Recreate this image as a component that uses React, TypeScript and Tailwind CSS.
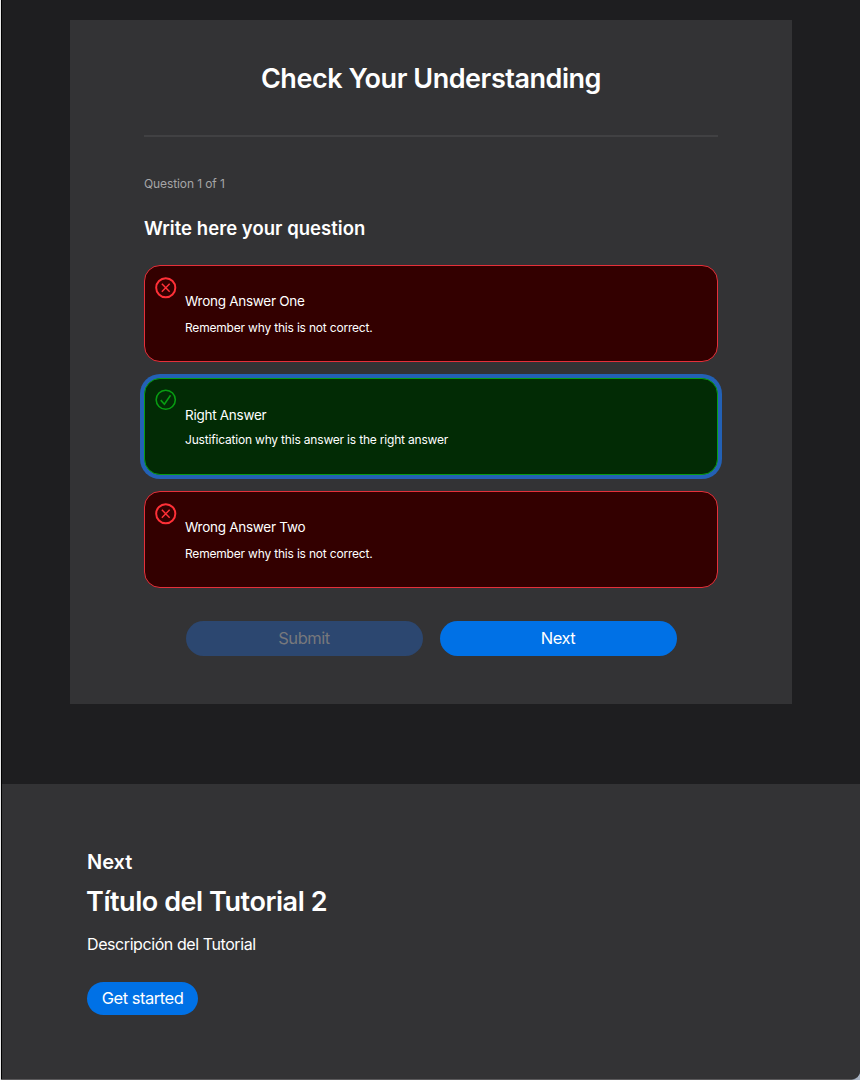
type AnswerProps = { title: string; note: string; correct?: boolean };

function StatusIcon({ correct }: { correct?: boolean }) {
  return (
    <svg
      viewBox="0 0 22 22"
      className={`h-[21.5px] w-[21.5px] shrink-0 ${correct ? "text-[#089c12]" : "text-[#ff3037]"}`}
      fill="none"
      stroke="currentColor"
    >
      <circle cx="11" cy="11" r="9.8" strokeWidth={correct ? 1.6 : 2} />
      {correct ? (
        <path d="M5.9 11.4 9.6 15.6 15.9 6.4" strokeWidth="1.6" />
      ) : (
        <path d="M7 7 15 15M15 7 7 15" strokeWidth="1.5" />
      )}
    </svg>
  );
}

function Answer({ title, note, correct }: AnswerProps) {
  return (
    <div
      className={`flex h-[97px] rounded-[16px] border pl-[10px] ${
        correct
          ? "border-[#089c12] bg-[#022b05] pt-[10px] shadow-[0_0_0_4px_#2361b5]"
          : "border-[#e5303a] bg-[#330000] pt-[11px]"
      }`}
    >
      <StatusIcon correct={correct} />
      <div className={`ml-[8.5px] ${correct ? "pt-4" : "pt-[14px]"}`}>
        <p className="text-[13.5px] leading-5 tracking-[-0.27px]">{title}</p>
        <p className={`text-[12px] leading-[18px] tracking-[-0.19px] ${correct ? "mt-1.5" : "mt-2"}`}>{note}</p>
      </div>
    </div>
  );
}

export default function App() {
  return (
    <div className="h-[1080px] w-[860px] border-l border-[#e8e8e8] bg-[#a9b5c5] font-[Inter,sans-serif] text-white">
      <div className="flex h-[1080px] flex-col overflow-hidden rounded-br-[9px] border-b border-[#5b5a5c] bg-[#1e1e20]">
        <main className="flex h-[784px] shrink-0 flex-col border-l border-black pt-5">
          <section className="ml-[67.5px] h-[684px] w-[722.5px] bg-[#333335] pl-[74.5px] pr-[74px] pt-[41px]">
            <h1 className="whitespace-nowrap text-center text-[27px] font-semibold leading-9 tracking-[-0.46px]">Check Your Understanding</h1>
            <hr className="mt-[38px] border-t-2 border-[#414143]" />
            <p className="mt-[38px] text-[12px] leading-[18px] tracking-[-0.1px] text-[#a5a5a7]">Question 1 of 1</p>
            <h2 className="mt-[21px] text-[18.5px] font-semibold leading-7 tracking-[0.04px]">Write here your question</h2>
            <div className="mt-[23px] flex flex-col gap-4">
              <Answer title="Wrong Answer One" note="Remember why this is not correct." />
              <Answer correct title="Right Answer" note="Justification why this answer is the right answer" />
              <Answer title="Wrong Answer Two" note="Remember why this is not correct." />
            </div>
            <div className="mt-[33px] flex justify-center gap-[17px]">
              <button className="h-[35px] w-[237px] rounded-full bg-[#2c4770] text-[16.5px] tracking-[-0.45px] text-[#77787c]" disabled>Submit</button>
              <button className="h-[35px] w-[237px] rounded-full bg-[#0071e6] text-[16.5px] tracking-[-0.45px]">Next</button>
            </div>
          </section>
        </main>
        <footer className="flex grow flex-col items-start border-l border-black bg-[#333335] pl-[85px] pt-16">
          <p className="text-[20px] font-semibold leading-7">Next</p>
          <h2 className="-ml-px mt-2 text-[27px] font-semibold leading-9 tracking-[-0.44px]">Título del Tutorial 2</h2>
          <p className="mt-3 text-[16px] leading-6 tracking-[-0.42px]">Descripción del Tutorial</p>
          <button className="mt-[26px] h-[33px] w-[111px] rounded-full bg-[#0071e6] text-[16.5px] tracking-[-0.48px]">Get started</button>
        </footer>
      </div>
    </div>
  );
}
